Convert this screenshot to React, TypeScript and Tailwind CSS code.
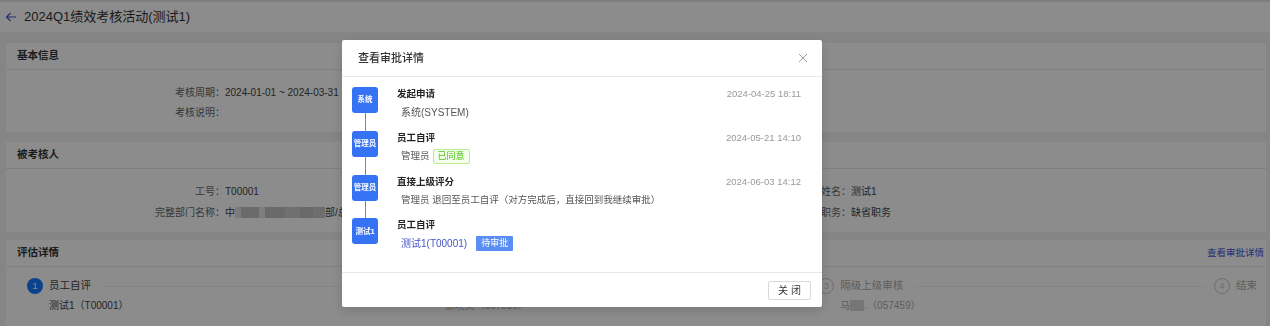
import React from 'react';

const Avatar = ({ label }: { label: string }) => (
    <div className="w-[26px] h-[26px] rounded-[3px] bg-[#3572f4] flex items-center justify-center text-white text-[7.5px] font-bold leading-none shrink-0">
        {label}
    </div>
);

type Item = { avatar: string; title: string; date?: string; sub: React.ReactNode };

const items: Item[] = [
    { avatar: '系统', title: '发起申请', date: '2024-04-25 18:11', sub: <span className="text-[#555] text-[10px]">系统(SYSTEM)</span> },
    {
        avatar: '管理员',
        title: '员工自评',
        date: '2024-05-21 14:10',
        sub: (
            <>
                <span className="text-[#555]">管理员</span>
                <span className="ml-[3px] h-[15px] px-[4px] flex items-center border border-[#b7eb8f] bg-[#f6ffed] text-[#52c41a] text-[9px] rounded-[2px]">已同意</span>
            </>
        ),
    },
    { avatar: '管理员', title: '直接上级评分', date: '2024-06-03 14:12', sub: <span className="text-[#555]">管理员 退回至员工自评（对方完成后，直接回到我继续审批）</span> },
    {
        avatar: '测试1',
        title: '员工自评',
        sub: (
            <>
                <span className="text-[#4653c6] text-[10px]">测试1(T00001)</span>
                <span className="ml-[9px] h-[15px] px-[5px] flex items-center bg-[#5a8ef5] text-white text-[9px] rounded-[1px]">待审批</span>
            </>
        ),
    },
];

const ApprovalModal = () => (
    <div className="fixed left-[342px] top-[40px] w-[480px] bg-white rounded-[2px] shadow-[0_4px_12px_rgba(0,0,0,0.15)] z-20">
        {/* header */}
        <div className="h-[37px] px-[16px] flex items-center justify-between border-b border-[#e8e8e8]">
            <span className="text-[11px] font-medium text-[#333]">查看审批详情</span>
            <svg width="10" height="10" viewBox="0 0 10 10" className="mr-[-2px]">
                <path d="M1 1L9 9M9 1L1 9" stroke="#999" strokeWidth="1" />
            </svg>
        </div>

        {/* timeline */}
        <div className="pt-[10px] pl-[10px] pr-[21px] pb-[21px]">
            {items.map((it, i) => {
                const last = i === items.length - 1;
                return (
                    <div key={i} className="flex">
                        <div className="flex flex-col items-center w-[26px] shrink-0">
                            <Avatar label={it.avatar} />
                            {!last && <div className="w-px flex-1 bg-[#6d8bb8]" />}
                        </div>
                        <div className={`flex-1 ml-[19px] ${last ? '' : 'pb-[11px]'}`}>
                            <div className="h-[14px] flex items-center justify-between">
                                <span className="text-[9.5px] font-bold text-[#222]">{it.title}</span>
                                {it.date && <span className="text-[9.5px] text-[#999]">{it.date}</span>}
                            </div>
                            <div className="mt-[4px] min-h-[14px] pl-[4px] flex items-center text-[9.5px]">{it.sub}</div>
                        </div>
                    </div>
                );
            })}
        </div>

        {/* footer */}
        <div className="border-t border-[#e8e8e8] pt-[8px] pb-[7px] pr-[11px] flex justify-end">
            <button className="w-[43px] h-[19px] border border-[#d9d9d9] rounded-[2px] text-[10px] text-[#333] tracking-[3px] pl-[3px] bg-white">
                关闭
            </button>
        </div>
    </div>
);

const Blur = ({ w, c }: { w: number; c: string }) => (
    <span className={`inline-block h-[11px] align-middle ${c}`} style={{ width: w }} />
);

const Row = ({ label, value, lw = 'w-[219px]' }: { label: string; value: React.ReactNode; lw?: string }) => (
    <div className="flex h-[14px] items-center text-[10px]">
        <span className={`${lw} text-right text-[#666] shrink-0`}>{label}：</span>
        <span className="text-[#444] whitespace-nowrap">{value}</span>
    </div>
);

const Step = ({ n, title, desc, active, last }: { n: number; title: string; desc: React.ReactNode; active?: boolean; last?: boolean }) => (
    <div className={`flex items-start ${last ? 'flex-none' : 'flex-1'}`}>
        <div
            className={`w-4 h-4 rounded-full flex items-center justify-center text-[9px] leading-none shrink-0 ${
                active ? 'bg-[#1677ff] text-white' : 'border border-[#c8c8c8] text-[#c8c8c8]'
            }`}
        >
            {n}
        </div>
        <div className="ml-[6px] flex-1">
            <div className="flex items-center h-[16px]">
                <span className={`text-[10.5px] whitespace-nowrap ${active ? 'text-[#444]' : 'text-[#aaa]'}`}>{title}</span>
                {!last && <div className="flex-1 h-px bg-[#f0f0f0] ml-[12px] mr-[10px]" />}
            </div>
            <div className={`mt-[4px] h-[14px] flex items-center text-[10px] whitespace-nowrap ${active ? 'text-[#444]' : 'text-[#aaa]'}`}>{desc}</div>
        </div>
    </div>
);

const Card = ({ title, right, className, children }: { title: string; right?: React.ReactNode; className?: string; children: React.ReactNode }) => (
    <div className={`ml-[6px] mr-[4px] bg-white ${className}`}>
        <div className="h-[27px] px-[11px] pr-[2px] flex items-center justify-between border-b border-[#e8e8e8]">
            <span className="text-[10.5px] font-bold text-[#333]">{title}</span>
            {right}
        </div>
        {children}
    </div>
);

export default function App() {
    return (
        <div className="relative w-full h-[326px] overflow-hidden bg-[#f2f2f2] font-['Liberation_Sans','Noto_Sans_CJK_SC',sans-serif]">
            {/* page header */}
            <div className="h-[2px] bg-[#e6e6e6]" />
            <div className="h-[30px] bg-white flex items-center pl-[5px]">
                <svg width="12" height="10" viewBox="0 0 12 10">
                    <path d="M11 5H1.5M5.5 1L1.5 5L5.5 9" stroke="#4a55c8" strokeWidth="1.2" fill="none" />
                </svg>
                <span className="ml-[7px] text-[13px] text-[#333]">2024Q1绩效考核活动(测试1)</span>
            </div>

            <div className="pt-[11px]">
                <Card title="基本信息">
                    <div className="pt-[15px] pb-[13px] flex flex-col gap-[6px]">
                        <Row label="考核周期" value="2024-01-01 ~ 2024-03-31" />
                        <Row label="考核说明" value="" />
                    </div>
                </Card>

                <Card title="被考核人" className="mt-[10px]">
                    <div className="pt-[15px] pb-[13px] flex flex-col gap-[7px]">
                        <div className="flex">
                            <div className="w-1/2"><Row label="工号" value="T00001" /></div>
                            <div className="w-1/2"><Row label="姓名" value="测试1" lw="w-[215px]" /></div>
                        </div>
                        <div className="flex">
                            <div className="w-1/2">
                                <Row
                                    label="完整部门名称"
                                    value={
                                        <span className="flex items-center">
                                            中
                                            <Blur w={6} c="bg-[#e2e2e2]" />
                                            <Blur w={18} c="bg-[#c4c4c4]" />
                                            <Blur w={6} c="bg-[#e6e6e6]" />
                                            <Blur w={20} c="bg-[#c2c2c2]" />
                                            <Blur w={15} c="bg-[#cdcdcd]" />
                                            <Blur w={13} c="bg-[#bfbfbf]" />
                                            <Blur w={12} c="bg-[#c9c9c9]" />
                                            部/总部
                                        </span>
                                    }
                                />
                            </div>
                            <div className="w-1/2"><Row label="职务" value="缺省职务" lw="w-[215px]" /></div>
                        </div>
                    </div>
                </Card>

                <Card
                    title="评估详情"
                    className="mt-[8px] h-[120px]"
                    right={<span className="text-[9.5px] text-[#3f51d6]">查看审批详情</span>}
                >
                    <div className="pt-[11px] pl-[21px] pr-[9px] flex">
                        <Step n={1} title="员工自评" desc="测试1（T00001）" active />
                        <Step n={2} title="直接上级评分" desc="徐晓文（057330）" />
                        <Step
                            n={3}
                            title="隔级上级审核"
                            desc={
                                <span className="flex items-center">
                                    马<Blur w={14} c="bg-[#d8d8d8]" />.（057459）
                                </span>
                            }
                        />
                        <Step n={4} title="结束" desc="" last />
                    </div>
                </Card>
            </div>

            {/* mask */}
            <div className="fixed inset-0 bg-black/45 z-10" />
            <ApprovalModal />
        </div>
    );
}
